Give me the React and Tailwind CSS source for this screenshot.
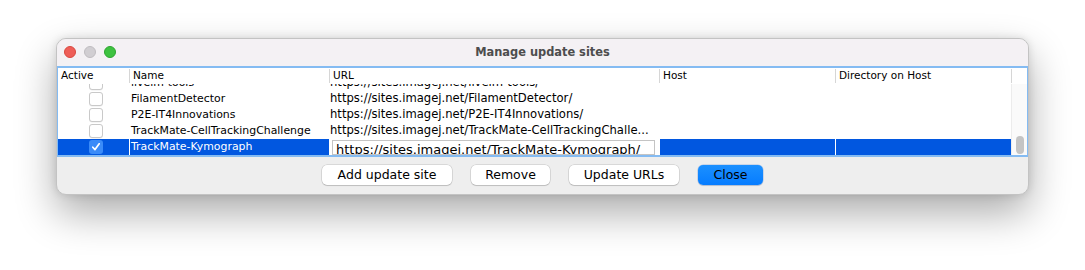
import React from "react";

const rows = [
  { name: "livelm-tools", url: "https://sites.imagej.net/livelm-tools/", on: false },
  { name: "FilamentDetector", url: "https://sites.imagej.net/FilamentDetector/", on: false },
  { name: "P2E-IT4Innovations", url: "https://sites.imagej.net/P2E-IT4Innovations/", on: false },
  { name: "TrackMate-CellTrackingChallenge", url: "https://sites.imagej.net/TrackMate-CellTrackingChalle...", on: false },
  { name: "TrackMate-Kymograph", url: "https://sites.imagej.net/TrackMate-Kymograph/", on: true, selected: true },
];

function Checkbox({ checked }) {
  if (checked) {
    return (
      <div className="w-[14px] h-[14px] rounded-[3px] bg-[#3a8bf8] flex items-center justify-center">
        <svg width="10" height="10" viewBox="0 0 10 10">
          <path d="M1.8 5.2 L4 7.6 L8.2 1.8" fill="none" stroke="white" strokeWidth="1.7" strokeLinecap="round" strokeLinejoin="round" />
        </svg>
      </div>
    );
  }
  return <div className="w-[14px] h-[14px] rounded-[3px] bg-white border border-[#c9c9c9] shadow-[0_0.5px_0.5px_rgba(0,0,0,0.08)]" />;
}

function HeaderCell({ label, width, first }) {
  return (
    <div className={`${width} h-full flex items-center shrink-0`}>
      {!first && <div className="w-px h-[14px] bg-[#d6d6d6]" />}
      <span className="pl-[3px]">{label}</span>
    </div>
  );
}

function Row({ row }) {
  const sel = row.selected;
  const text = sel ? "text-white" : "text-black";
  const bg = sel ? "bg-[#0157e0]" : "bg-white";
  return (
    <div className={`flex h-[16px] shrink-0 ${text}`}>
      <div className={`w-[71px] shrink-0 flex items-center justify-center ${bg}`}>
        <div className="pl-[4px]">
          <Checkbox checked={row.on} />
        </div>
      </div>
      <div className={`w-[200px] shrink-0 flex items-center border-l border-white pl-[1px] whitespace-nowrap overflow-hidden text-[10.9px] ${bg}`}>
        {row.name}
      </div>
      {sel ? (
        <div className="w-[330px] shrink-0 bg-white pl-[3px] pr-[4px] pt-[1px]">
          <div className="h-[15px] border border-[#c4c4c4] overflow-hidden pl-[3px] text-[13px] leading-[17px] text-black whitespace-nowrap">
            {row.url}
          </div>
        </div>
      ) : (
        <div className="w-[330px] shrink-0 flex items-center pl-[1px] whitespace-nowrap overflow-hidden text-[11.6px]">
          {row.url}
        </div>
      )}
      <div className={`w-[176px] shrink-0 border-l border-white ${bg}`} />
      <div className={`w-[176px] shrink-0 border-l border-white ${bg}`} />
    </div>
  );
}

export default function App() {
  return (
    <div className="w-[1085px] h-[270px] bg-white pl-[56px] pt-[38px] font-['DejaVu_Sans',sans-serif] overflow-hidden">
      <div className="w-[973px] h-[157px] rounded-[10px] bg-[#eeeeee] border border-[#c3c3c3] overflow-hidden flex flex-col shadow-[0_18px_40px_rgba(0,0,0,0.33),0_0_8px_rgba(0,0,0,0.12)]">
        {/* title bar */}
        <div className="h-[27px] shrink-0 bg-[#f4f1f4] relative flex items-center justify-center">
          <div className="absolute left-[7px] top-[7px] flex gap-[8px]">
            <div className="w-[12px] h-[12px] rounded-full bg-[#ee5e58] border border-[#d9483f]" />
            <div className="w-[12px] h-[12px] rounded-full bg-[#d1ced2] border border-[#bfbcc0]" />
            <div className="w-[12px] h-[12px] rounded-full bg-[#3ec240] border border-[#2ea530]" />
          </div>
          <span className="text-[11.4px] font-bold text-[#4d4d4d] pt-[1px]">Manage update sites</span>
        </div>

        {/* table */}
        <div className="h-[91px] shrink-0 border-2 border-[#84bbf2] bg-white flex text-[11px] -mx-px">
          <div className="flex-1 flex flex-col">
            <div className="h-[16px] shrink-0 flex text-[10.5px] text-black">
              <HeaderCell label="Active" width="w-[71px]" first />
              <HeaderCell label="Name" width="w-[200px]" />
              <HeaderCell label="URL" width="w-[330px]" />
              <HeaderCell label="Host" width="w-[176px]" />
              <HeaderCell label="Directory on Host" width="w-[176px]" />
            </div>
            <div className="flex-1 overflow-hidden">
              <div className="flex flex-col -mt-[9px]">
                {rows.map((r) => (
                  <Row key={r.name} row={r} />
                ))}
              </div>
            </div>
          </div>
          <div className="w-[16px] shrink-0 flex flex-col">
            <div className="h-[16px] shrink-0 flex items-center">
              <div className="w-px h-[14px] bg-[#d6d6d6]" />
            </div>
            <div className="flex-1 bg-[#fafafa] border-l border-[#ececec] flex flex-col justify-end items-center pb-[1px]">
              <div className="w-[8px] h-[18px] rounded-full bg-[#c4c4c4]" />
            </div>
          </div>
        </div>

        {/* buttons */}
        <div className="flex-1 flex justify-center items-start pt-[8px] gap-[19px] text-[12.5px]">
          <button className="w-[130px] h-[20px] rounded-[5px] bg-white text-black shadow-[0_0_0_0.5px_rgba(0,0,0,0.18),0_1px_1px_rgba(0,0,0,0.12)]">
            Add update site
          </button>
          <button className="w-[79px] h-[20px] rounded-[5px] bg-white text-black shadow-[0_0_0_0.5px_rgba(0,0,0,0.18),0_1px_1px_rgba(0,0,0,0.12)]">
            Remove
          </button>
          <button className="w-[110px] h-[20px] rounded-[5px] bg-white text-black shadow-[0_0_0_0.5px_rgba(0,0,0,0.18),0_1px_1px_rgba(0,0,0,0.12)]">
            Update URLs
          </button>
          <button className="w-[65px] h-[20px] rounded-[5px] bg-gradient-to-b from-[#1b90ff] to-[#067cff] text-black shadow-[0_0_0_0.5px_rgba(0,80,200,0.3),0_1px_1px_rgba(0,0,0,0.12)]">
            Close
          </button>
        </div>
      </div>
    </div>
  );
}
